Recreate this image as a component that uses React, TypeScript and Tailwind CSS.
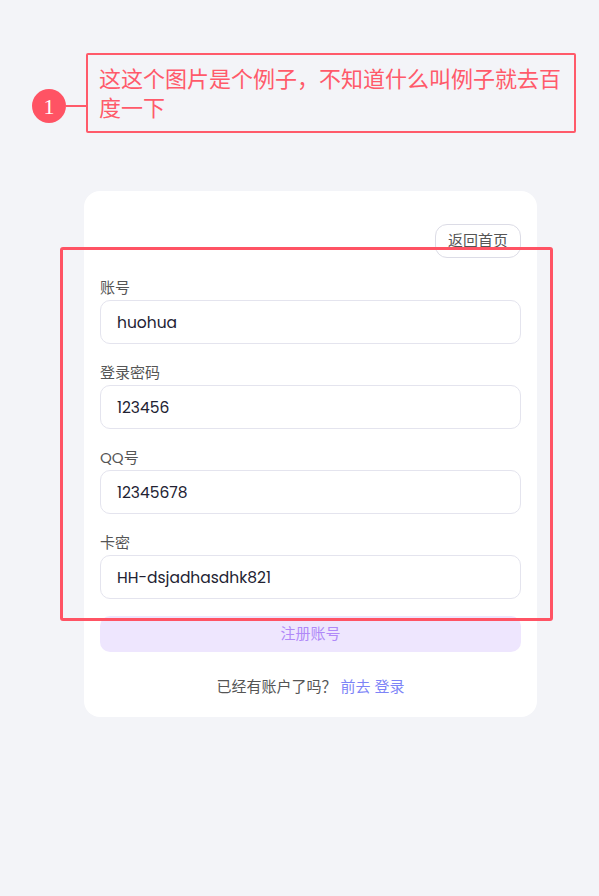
const fields = [
  { label: '账号', value: 'huohua' },
  { label: '登录密码', value: '123456' },
  { label: 'QQ号', value: '12345678' },
  { label: '卡密', value: 'HH-dsjadhasdhk821' },
]

const font = { fontFamily: 'Poppins, "Noto Sans", "Noto Sans CJK SC", sans-serif' }

export default function App() {
  return (
    <div className="relative min-h-[896px] w-full bg-[#f3f4f8]" style={font}>
      <div className="flex pl-[84px] pt-[191px]">
        <div className="w-[453px] rounded-2xl bg-white px-4 pt-[33px] pb-[18px]">
          <div className="flex justify-end">
            <button className="h-[34px] rounded-xl border border-[#dcdce6] px-3 text-[15px] text-[#555]">
              返回首页
            </button>
          </div>
          <div className="mt-5 flex flex-col gap-[19px]">
            {fields.map((f) => (
              <div key={f.label}>
                <div className="mb-[2px] h-5 text-[15px] leading-5 text-[#555]">{f.label}</div>
                <input
                  readOnly
                  value={f.value}
                  className="h-[44px] w-full rounded-[10px] border border-[#e4e4ee] px-4 text-[15.5px] text-[#222232] outline-none"
                />
              </div>
            ))}
          </div>
          <button className="mt-[17px] h-9 w-full rounded-[10px] bg-[#eee6fe] text-[15px] text-[#b089f8]">
            注册账号
          </button>
          <div className="mt-6 text-center text-[15px] text-[#555]">
            已经有账户了吗？ <span className="text-[#7d84f7]">前去 登录</span>
          </div>
        </div>
      </div>

      {/* annotation overlay */}
      <div className="absolute left-[60px] top-[247px] h-[374px] w-[493px] rounded-[3px] border-[3px] border-[#ff5364]" />
      <div className="absolute left-[86px] top-[53px] h-[80px] w-[490px] rounded-[2px] border-2 border-[#ff5a6a] px-[11px] pt-[10px] text-[22px] leading-[29px] text-[#ff5a6a]">
        这这个图片是个例子，不知道什么叫例子就去百度一下
      </div>
      <div className="absolute left-[66px] top-[105px] h-[2px] w-5 bg-[#ff5a6a]" />
      <div
        className="absolute left-[32px] top-[89px] flex h-[34px] w-[34px] items-center justify-center rounded-full bg-[#ff5364] text-[22px] text-white"
        style={{ fontFamily: '"Liberation Serif", serif' }}
      >
        1
      </div>
    </div>
  )
}
